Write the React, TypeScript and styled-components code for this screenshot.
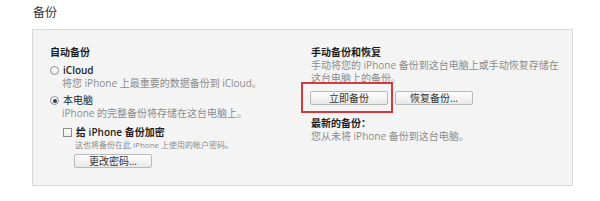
import React from "react";
import styled, { createGlobalStyle } from "styled-components";

const Global = createGlobalStyle`
  html, body { margin: 0; padding: 0; background: #ffffff; }
  body {
    font-family: "Open Sans", "Noto Sans CJK SC", sans-serif;
    -webkit-font-smoothing: antialiased;
  }
`;

const Page = styled.div`
  width: 600px;
  height: 201px;
  box-sizing: border-box;
  padding: 5px 0 0 32px;
`;

const Heading = styled.div`
  font-size: 12px;
  line-height: 16px;
  color: #333;
  margin: 0 0 8px 1px;
`;

const Panel = styled.div`
  width: 541px;
  height: 157px;
  box-sizing: border-box;
  background: #f4f4f4;
  border: 1px solid #d8d8d8;
  display: grid;
  grid-template-columns: 261px 1fr;
  padding: 16px 0 0 17px;
`;

const Column = styled.div`
  display: flex;
  flex-direction: column;
  align-items: flex-start;
`;

const SectionTitle = styled.div<{ $mt?: number }>`
  font-size: 10px;
  line-height: 13px;
  font-weight: 700;
  color: #1c1c1c;
  margin-top: ${(p) => p.$mt ?? 0}px;
`;

const OptionRow = styled.div<{ $mt?: number; $indent?: number }>`
  display: flex;
  align-items: center;
  gap: 4px;
  height: 13px;
  margin-top: ${(p) => p.$mt ?? 0}px;
  margin-left: ${(p) => p.$indent ?? 0}px;
  font-size: 10px;
  color: #1f1f1f;
`;

const Label = styled.span<{ $bold?: boolean }>`
  font-weight: ${(p) => (p.$bold ? 600 : 400)};
  line-height: 13px;
`;

const Radio = styled.span<{ $checked?: boolean }>`
  width: 9px;
  height: 9px;
  box-sizing: border-box;
  border-radius: 50%;
  border: 1px solid #8d8d8d;
  background: linear-gradient(#ffffff, #ececec);
  display: inline-flex;
  align-items: center;
  justify-content: center;
  &::after {
    content: "";
    display: ${(p) => (p.$checked ? "block" : "none")};
    width: 4px;
    height: 4px;
    border-radius: 50%;
    background: #2c3e5c;
  }
`;

const Checkbox = styled.span`
  width: 9px;
  height: 9px;
  box-sizing: border-box;
  border: 1px solid #8d8d8d;
  background: linear-gradient(#ffffff, #ececec);
`;

const Desc = styled.div<{ $indent?: number; $small?: boolean }>`
  font-size: ${(p) => (p.$small ? 8 : 10)}px;
  line-height: ${(p) => (p.$small ? 11 : 13)}px;
  color: #8c8c8c;
  margin-left: ${(p) => p.$indent ?? 0}px;
  white-space: nowrap;
`;

const Button = styled.button<{ $mt?: number; $ml?: number }>`
  width: 78px;
  height: 14px;
  box-sizing: border-box;
  padding: 0;
  margin: ${(p) => p.$mt ?? 0}px 0 0 ${(p) => p.$ml ?? 0}px;
  font-family: inherit;
  font-size: 10px;
  line-height: 12px;
  color: #333;
  background: linear-gradient(#fefefe, #e8e8e8);
  border: 1px solid #b9b9b9;
  border-radius: 2px;
  display: flex;
  align-items: center;
  justify-content: center;
`;

const ButtonRow = styled.div`
  display: flex;
  gap: 7px;
  margin-top: 6px;
  margin-left: -1px;
`;

const Highlight = styled.div`
  position: relative;
  &::after {
    content: "";
    position: absolute;
    top: -9px;
    left: -9px;
    right: -5px;
    bottom: -8px;
    border: 2px solid #d23a3f;
    pointer-events: none;
  }
`;

export default function App() {
  return (
    <>
      <Global />
      <Page>
        <Heading>备份</Heading>
        <Panel>
          <Column>
            <SectionTitle>自动备份</SectionTitle>
            <OptionRow $mt={5}>
              <Radio />
              <Label $bold>iCloud</Label>
            </OptionRow>
            <Desc $indent={12}>将您 iPhone 上最重要的数据备份到 iCloud。</Desc>
            <OptionRow $mt={4}>
              <Radio $checked />
              <Label>本电脑</Label>
            </OptionRow>
            <Desc $indent={12}>iPhone 的完整备份将存储在这台电脑上。</Desc>
            <OptionRow $mt={6} $indent={13}>
              <Checkbox />
              <Label $bold>给 iPhone 备份加密</Label>
            </OptionRow>
            <Desc $indent={25} $small>这也将备份在此 iPhone 上使用的帐户密码。</Desc>
            <Button $mt={4} $ml={24}>更改密码...</Button>
          </Column>
          <Column>
            <SectionTitle>手动备份和恢复</SectionTitle>
            <Desc>
              手动将您的 iPhone 备份到这台电脑上或手动恢复存储在
              <br />
              这台电脑上的备份。
            </Desc>
            <ButtonRow>
              <Highlight>
                <Button>立即备份</Button>
              </Highlight>
              <Button>恢复备份...</Button>
            </ButtonRow>
            <SectionTitle $mt={12}>最新的备份：</SectionTitle>
            <Desc>您从未将 iPhone 备份到这台电脑。</Desc>
          </Column>
        </Panel>
      </Page>
    </>
  );
}
